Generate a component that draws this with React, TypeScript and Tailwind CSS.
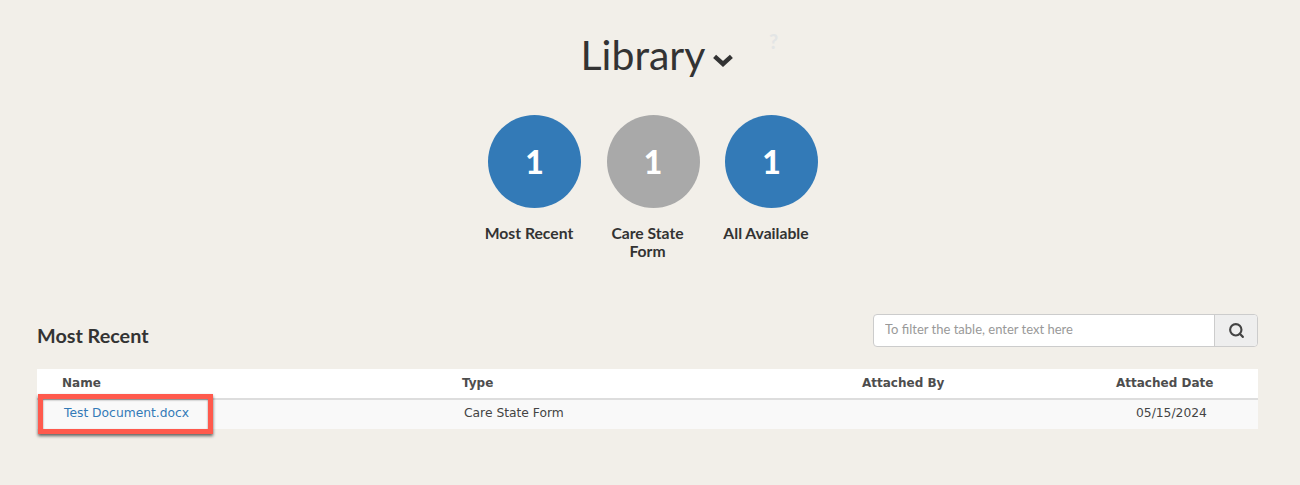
import { Search } from 'lucide-react';

const stats = [
    { label: 'Most Recent', color: 'bg-[#337ab7]' },
    { label: 'Care State Form', color: 'bg-[#a9a9a9]' },
    { label: 'All Available', color: 'bg-[#337ab7]' },
];

const App = () => {
    return (
        <main className="relative h-[485px] w-full overflow-hidden bg-[#f2efe9] font-['Lato',sans-serif] text-[#333]">
            <header className="relative flex justify-center pt-[30px]">
                <h1 className="flex h-[50px] items-center pl-[14px] text-[41px] leading-[50px]">
                    Library
                    <svg
                        viewBox="0 0 20 14"
                        className="ml-[8px] mt-[9px] h-[14px] w-[20px]"
                        fill="none"
                        stroke="currentColor"
                        strokeWidth="4.4"
                    >
                        <path d="M1.6 3.4 L10 11 L18.4 3.4" />
                    </svg>
                </h1>
                <span className="absolute left-[769px] top-[31px] text-[20px] leading-[20px] font-bold text-[#e3e5e5]">?</span>
            </header>

            <section className="mt-[35px] flex justify-center pl-[6px]">
                {stats.map((stat) => (
                    <div key={stat.label} className="flex w-[118.5px] flex-col items-center">
                        <div
                            className={`flex h-[93px] w-[93px] items-center justify-center rounded-full text-[32px] font-black text-white ${stat.color}`}
                        >
                            1
                        </div>
                        <p className="mt-[16px] w-[100px] -translate-x-[5.5px] text-center text-[15.7px] leading-[18px] font-bold">
                            {stat.label}
                        </p>
                    </div>
                ))}
            </section>

            <section className="mt-[54px] px-[37px] pr-[42px]">
                <div className="flex h-[32px] items-center justify-between">
                    <h2 className="mt-[12px] text-[19.8px] font-bold">Most Recent</h2>
                    <div className="flex h-[33px] w-[385px] rounded border border-[#ccc] bg-white">
                        <input
                            placeholder="To filter the table, enter text here"
                            className="min-w-0 flex-1 bg-transparent pl-[11px] text-[13px] outline-none placeholder:text-[#999]"
                        />
                        <button className="flex w-[43px] items-center justify-center rounded-r border-l border-[#ccc] bg-[#eeeeee]">
                            <Search className="h-[17px] w-[17px] text-[#444]" strokeWidth={3} />
                        </button>
                    </div>
                </div>

                <table className="mt-[23px] w-[1221px] table-fixed font-['DejaVu_Sans',sans-serif] text-[12px]">
                    <colgroup>
                        <col className="w-[400px]" />
                        <col className="w-[400px]" />
                        <col className="w-[254px]" />
                        <col className="w-[167px]" />
                    </colgroup>
                    <thead>
                        <tr className="h-[30px] border-b-2 border-[#dddddd] bg-white text-left font-bold text-[#4d4d4d]">
                            <th className="pb-[2px] pl-[25px]">Name</th>
                            <th className="pb-[2px] pl-[25px]">Type</th>
                            <th className="pb-[2px] pl-[25px]">Attached By</th>
                            <th className="pb-[2px] pl-[25px]">Attached Date</th>
                        </tr>
                    </thead>
                    <tbody>
                        <tr className="h-[30px] bg-[#f9f9f9] text-[12.3px] text-[#444]">
                            <td className="pb-[2px] pl-[27px] text-[#337ab7]">Test Document.docx</td>
                            <td className="pb-[2px] pl-[27px]">Care State Form</td>
                            <td className="pb-[2px] pl-[27px]"></td>
                            <td className="pb-[2px] pl-[45px]">05/15/2024</td>
                        </tr>
                    </tbody>
                </table>
            </section>

            <div className="absolute left-[38px] top-[394px] h-[40px] w-[175px] border-[5px] border-[#ff5a4d] shadow-[0_2px_3px_rgba(0,0,0,0.6),inset_0_1px_2px_rgba(0,0,0,0.45)]" />
        </main>
    );
};

export default App;
